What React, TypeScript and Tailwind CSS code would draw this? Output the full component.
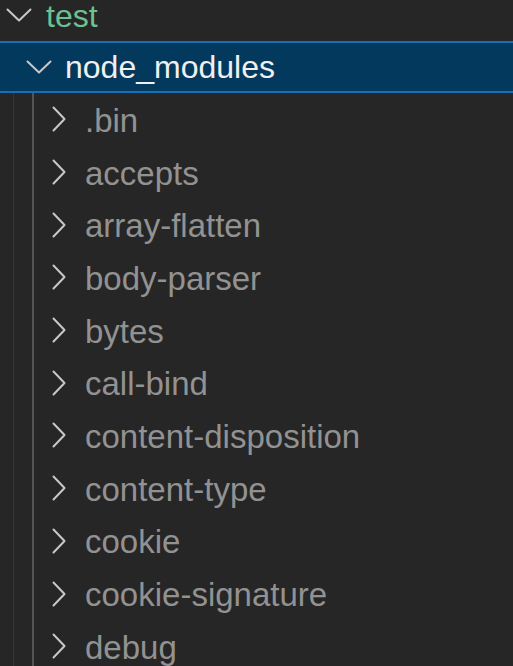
import React from 'react'

const children = [
  '.bin',
  'accepts',
  'array-flatten',
  'body-parser',
  'bytes',
  'call-bind',
  'content-disposition',
  'content-type',
  'cookie',
  'cookie-signature',
  'debug',
]

function ChevronDown({ className }: { className?: string }) {
  return (
    <svg className={className} width="26" height="14" viewBox="0 0 26 14" fill="none">
      <polyline points="1.5,1.5 13,12.5 24.5,1.5" stroke="#c8c8c8" strokeWidth="2" strokeLinecap="round" strokeLinejoin="round" />
    </svg>
  )
}

function ChevronRight({ className }: { className?: string }) {
  return (
    <svg className={className} width="14" height="26" viewBox="0 0 14 26" fill="none">
      <polyline points="1.5,1.5 12.5,13 1.5,24.5" stroke="#c8c8c8" strokeWidth="2" strokeLinecap="round" strokeLinejoin="round" />
    </svg>
  )
}

export default function App() {
  return (
    <div
      className="w-[513px] h-[666px] overflow-hidden bg-[#262626]"
      style={{ fontFamily: '"Liberation Sans", Arial, sans-serif' }}
    >
      <div className="-mt-[12px] flex flex-col leading-none">
        {/* test */}
        <div className="flex items-center h-[53px] pl-[6px] text-[32px]">
          <ChevronDown className="shrink-0" />
          <span className="ml-[14px] text-[#6cc190] mt-[2px]">test</span>
        </div>

        {/* node_modules (selected) */}
        <div className="flex items-center h-[52px] pl-[26px] bg-[#04395e] border-y-[2px] border-[#1270b8] text-[32px]">
          <ChevronDown className="shrink-0" />
          <span className="ml-[13px] text-[#f0f0f0]">node_modules</span>
        </div>

        {children.map((name) => (
          <div key={name} className="flex items-center h-[52.7px] text-[33px]">
            <div className="w-[13px] h-full shrink-0" />
            <div className="w-[19px] h-full shrink-0 border-l border-[#363636]" />
            <div className="w-[20px] h-full shrink-0 border-l-[2px] border-[#545454]" />
            <ChevronRight className="shrink-0" />
            <span className="ml-[19px] text-[#929292] mt-[2px]">{name}</span>
          </div>
        ))}
      </div>
    </div>
  )
}
